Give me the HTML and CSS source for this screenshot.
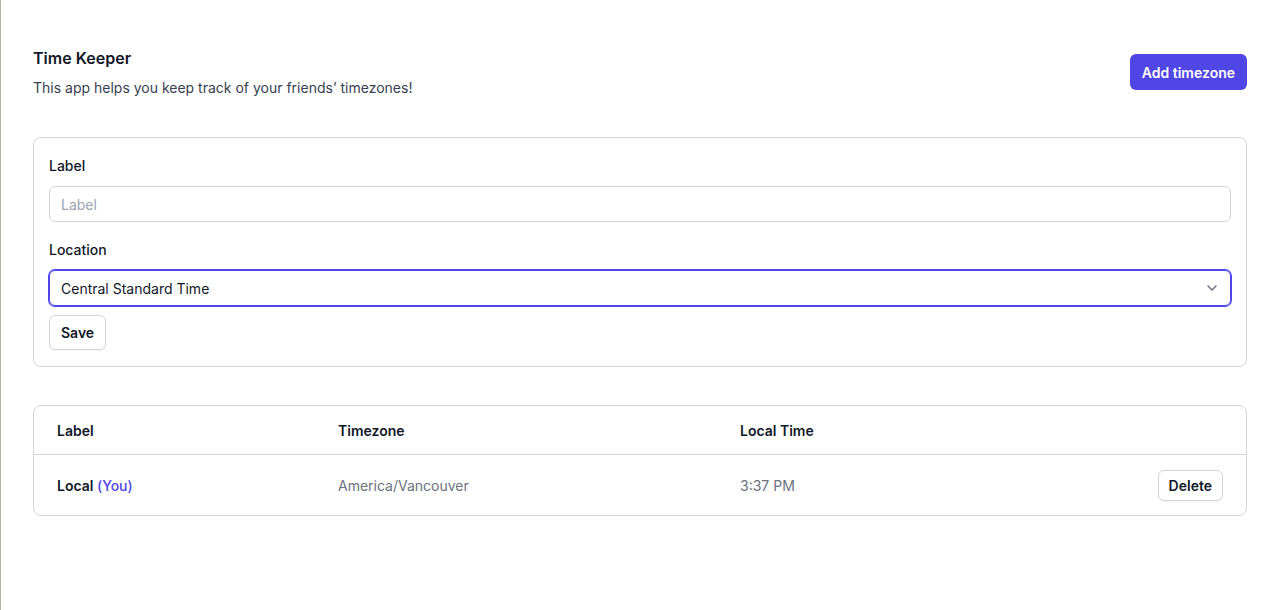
FILE: index.html
```html
<!DOCTYPE html>
<html lang="en">
<head>
<meta charset="utf-8">
<title>Time Keeper</title>
<link rel="stylesheet" href="styles.css">
</head>
<body>
<div class="page">
  <header class="header">
    <div class="intro">
      <h1 class="title">Time Keeper</h1>
      <p class="subtitle">This app helps you keep track of your friends’ timezones!</p>
    </div>
    <button class="btn-primary">Add timezone</button>
  </header>

  <form class="card form-card">
    <label class="field-label" for="label">Label</label>
    <input class="input" id="label" type="text" placeholder="Label">
    <label class="field-label loc" for="loc">Location</label>
    <div class="select">
      <span>Central Standard Time</span>
      <svg class="chev" width="20" height="20" viewBox="0 0 20 20" fill="none"><path d="M6 8l4 4 4-4" stroke="#6b7280" stroke-width="1.5" stroke-linecap="round" stroke-linejoin="round"/></svg>
    </div>
    <div class="actions"><button type="button" class="btn">Save</button></div>
  </form>

  <div class="card table-card">
    <div class="row head">
      <div class="cell">Label</div>
      <div class="cell">Timezone</div>
      <div class="cell">Local Time</div>
      <div class="cell"></div>
    </div>
    <div class="row body">
      <div class="cell strong">Local <span class="you">(You)</span></div>
      <div class="cell muted">America/Vancouver</div>
      <div class="cell muted">3:37 PM</div>
      <div class="cell end"><button class="btn small">Delete</button></div>
    </div>
  </div>
</div>
</body>
</html>
```

FILE: styles.css
```css
* { box-sizing: border-box; }
html, body { margin: 0; padding: 0; background: #fff; }
body {
  font-family: Inter, "Noto Sans", sans-serif;
  color: #111827;
  border-left: 1px solid #b3b6a4;
  min-height: 610px;
}
.page { padding: 46px 30px 40px 32px; }
.header { display: flex; justify-content: space-between; align-items: center; }
.title { margin: 0; font-size: 16px; line-height: 24px; font-weight: 600; color: #111827; }
.subtitle { margin: 8px 0 0; font-size: 14px; line-height: 20px; color: #374151; }
.btn-primary {
  font-family: inherit; font-size: 14px; font-weight: 600; color: #fff;
  background: #4f46e5; border: 0; border-radius: 6px; height: 36px; padding: 0 12px;
}
.card { border: 1px solid #d4d5dc; border-radius: 8px; background: #fff; }
.form-card { margin-top: 39px; padding: 16px 15px 16px 15px; display: flex; flex-direction: column; }
.field-label { font-size: 14px; line-height: 24px; font-weight: 500; color: #111827; }
.field-label.loc { margin-top: 16px; }
.input {
  margin-top: 8px; height: 36px; border: 1px solid #d4d5dc; border-radius: 6px;
  padding: 0 11px; font-family: inherit; font-size: 14px; color: #111827; outline: none;
}
.input::placeholder { color: #9ca3af; }
.select {
  margin-top: 8px; height: 36px; border: 1px solid #4f46e5; box-shadow: 0 0 0 1px #4f46e5;
  border-radius: 6px; padding: 0 8px 0 11px; display: flex; align-items: center;
  justify-content: space-between; font-size: 14px; color: #111827;
}
.chev { display: block; }
.actions { margin-top: 9px; display: flex; }
.btn {
  font-family: inherit; font-size: 14px; font-weight: 600; color: #111827;
  background: #fff; border: 1px solid #d4d5dc; border-radius: 6px; height: 35px; padding: 0 11px;
  box-shadow: 0 1px 1px rgba(0,0,0,0.04);
}
.btn.small { height: 31px; padding: 0 10px; }
.table-card { margin-top: 38px; }
.row { display: grid; grid-template-columns: 281px 402px 1fr auto; align-items: center; padding: 0 23px 0 23px; font-size: 14px; }
.row.head { height: 49px; font-weight: 600; border-bottom: 1px solid #d4d5dc; }
.row.body { height: 60px; }
.strong { font-weight: 600; }
.you { color: #4f46e5; font-weight: 500; }
.muted { color: #6b7280; }
.end { justify-self: end; }
```
